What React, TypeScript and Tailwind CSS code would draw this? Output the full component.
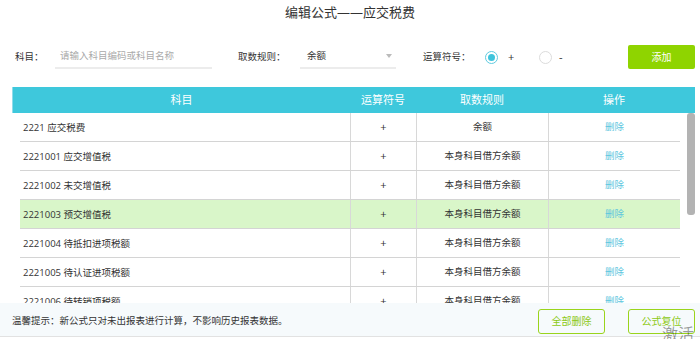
import React from 'react';

const rows = [
  { name: '2221 应交税费', op: '+', rule: '余额' },
  { name: '2221001 应交增值税', op: '+', rule: '本身科目借方余额' },
  { name: '2221002 未交增值税', op: '+', rule: '本身科目借方余额' },
  { name: '2221003 预交增值税', op: '+', rule: '本身科目借方余额', active: true },
  { name: '2221004 待抵扣进项税额', op: '+', rule: '本身科目借方余额' },
  { name: '2221005 待认证进项税额', op: '+', rule: '本身科目借方余额' },
  { name: '2221006 待转销项税额', op: '+', rule: '本身科目借方余额' },
];

const font = { fontFamily: '"Open Sans", "Noto Sans CJK SC", sans-serif' };

const App = () => {
  return (
    <div
      className="relative w-[700px] h-[339px] overflow-hidden bg-white text-[#333]"
      style={font}
    >
      {/* Title */}
      <div className="h-[25px] flex items-center justify-center text-[13px] text-[#333]">
        编辑公式——应交税费
      </div>

      {/* Filter row */}
      <div className="mt-[20px] h-[24px] flex items-center pl-[15px] pr-[5px] text-[9.5px]">
        <span className="w-[40px]">科目：</span>
        <div className="w-[157px] h-[24px] flex items-center pl-[5px] border-b-2 border-[#ececec] text-[#aaa]">
          请输入科目编码或科目名称
        </div>
        <span className="ml-[26px] w-[62px]">取数规则：</span>
        <div className="w-[96px] h-[24px] flex items-center justify-between pl-[7px] pr-[4px] border-b-2 border-[#ececec]">
          <span>余额</span>
          <span className="w-0 h-0 border-l-[3px] border-r-[3px] border-t-[4px] border-l-transparent border-r-transparent border-t-[#bbb]" />
        </div>
        <span className="ml-[27px] w-[62px]">运算符号：</span>
        <span className="w-[13px] h-[13px] rounded-full border border-[#5fcbe0] flex items-center justify-center">
          <span className="w-[7px] h-[7px] rounded-full bg-[#3ec4dc]" />
        </span>
        <span className="ml-[10px] w-[31px] text-[11px]">+</span>
        <span className="w-[13px] h-[13px] rounded-full border border-[#dcdcdc]" />
        <span className="ml-[7px] text-[11px]">-</span>
        <button className="ml-auto w-[67px] h-[24px] rounded-[2px] bg-[#8fd400] text-white text-[10px]">
          添加
        </button>
      </div>

      {/* Table */}
      <div className="mt-[18px] ml-[12px] w-[683px]">
        <div className="h-[26px] flex items-center bg-[#3ec8dc] border-l border-[#8fdcea] text-white text-[11px]">
          <div className="w-[337px] text-center">科目</div>
          <div className="w-[66px] text-center">运算符号</div>
          <div className="w-[132px] text-center">取数规则</div>
          <div className="w-[132px] text-center">操作</div>
        </div>
        <div className="h-[190px] flex overflow-hidden">
          <div className="w-[8px]" />
          <div className="w-[660px] flex flex-col text-[9.5px]">
            {rows.map((r) => (
              <div
                key={r.name}
                className={`h-[29px] shrink-0 flex border-b border-[#d4d4d4] ${r.active ? 'bg-[#d9f6c9]' : ''}`}
              >
                <div className="w-[330px] flex items-center pl-[3px] pt-[2px]">{r.name}</div>
                <div className="w-[66px] flex items-center justify-center border-l border-[#d8d8d8] text-[11px]">
                  {r.op}
                </div>
                <div className="w-[132px] flex items-center justify-center border-l border-[#d8d8d8] pt-[1px]">
                  {r.rule}
                </div>
                <div className="w-[132px] flex items-center justify-center border-l border-[#d8d8d8] pt-[1px] text-[#5cc6de]">
                  删除
                </div>
              </div>
            ))}
          </div>
          <div className="w-[15px] flex justify-end">
            <div className="w-[8px] h-[102px] rounded-[3px] bg-[#b3b3b3]" />
          </div>
        </div>
      </div>

      {/* Footer */}
      <div className="h-[34px] pt-[4px] flex items-center bg-[#f6fafc] border-b border-[#e2e2e2] pl-[12px] pr-[5px] text-[9.5px]">
        <span>温馨提示：新公式只对未出报表进行计算，不影响历史报表数据。</span>
        <button className="ml-auto w-[67px] h-[25px] rounded-[3px] border border-[#9ad41c] text-[#8cc914] text-[10px]">
          全部删除
        </button>
        <button className="ml-[23px] w-[67px] h-[25px] rounded-[3px] border border-[#9ad41c] text-[#8cc914] text-[10px]">
          公式复位
        </button>
      </div>

      {/* Windows watermark */}
      <div className="absolute left-[662px] top-[326px] text-[16px] leading-none text-black/40 pointer-events-none">
        激活
      </div>
    </div>
  );
};

export default App;
